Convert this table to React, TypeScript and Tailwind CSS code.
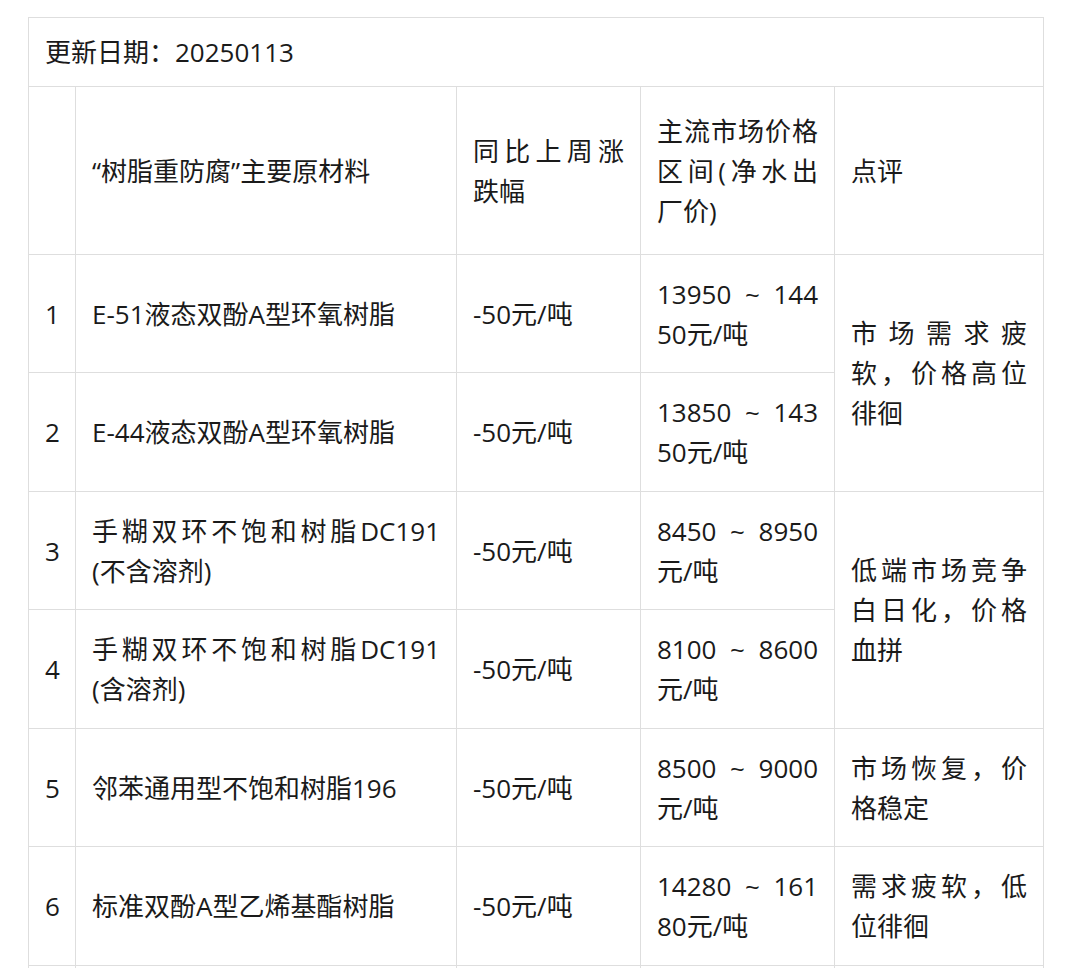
import React from "react";

const cell =
  "border border-[#dedede] px-[16px] py-0 align-middle text-justify break-all";

type Row = {
  n: string;
  name: React.ReactNode;
  change: string;
  price: string;
  comment?: string;
  span?: number;
  h: string;
};

const rows: Row[] = [
  {
    n: "1",
    name: "E-51液态双酚A型环氧树脂",
    change: "-50元/吨",
    price: "13950 ~ 14450元/吨",
    comment: "市场需求疲软，价格高位徘徊",
    span: 2,
    h: "h-[118px]",
  },
  {
    n: "2",
    name: "E-44液态双酚A型环氧树脂",
    change: "-50元/吨",
    price: "13850 ~ 14350元/吨",
    h: "h-[119px]",
  },
  {
    n: "3",
    name: (
      <>
        <span className="block [text-align-last:justify]">
          手糊双环不饱和树脂DC191
        </span>
        (不含溶剂)
      </>
    ),
    change: "-50元/吨",
    price: "8450 ~ 8950元/吨",
    comment: "低端市场竞争白日化，价格血拼",
    span: 2,
    h: "h-[118px]",
  },
  {
    n: "4",
    name: (
      <>
        <span className="block [text-align-last:justify]">
          手糊双环不饱和树脂DC191
        </span>
        (含溶剂)
      </>
    ),
    change: "-50元/吨",
    price: "8100 ~ 8600元/吨",
    h: "h-[119px]",
  },
  {
    n: "5",
    name: "邻苯通用型不饱和树脂196",
    change: "-50元/吨",
    price: "8500 ~ 9000元/吨",
    comment: "市场恢复，价格稳定",
    span: 1,
    h: "h-[118px]",
  },
  {
    n: "6",
    name: "标准双酚A型乙烯基酯树脂",
    change: "-50元/吨",
    price: "14280 ~ 16180元/吨",
    comment: "需求疲软，低位徘徊",
    span: 1,
    h: "h-[119px]",
  },
];

export default function App() {
  return (
    <div
      className="bg-white pl-[28px] pt-[17px] pb-[40px] text-[26px] leading-[40px] text-[#1a1a1a]"
      style={{ fontFamily: '"Open Sans", "Noto Sans CJK SC", sans-serif' }}
    >
      <table className="table-fixed border-collapse w-[1015px]">
        <colgroup>
          <col className="w-[47px]" />
          <col className="w-[381px]" />
          <col className="w-[184px]" />
          <col className="w-[194px]" />
          <col className="w-[209px]" />
        </colgroup>
        <tbody>
          <tr>
            <td colSpan={5} className={`${cell} h-[69px]`}>
              更新日期：20250113
            </td>
          </tr>
          <tr>
            <td className={`${cell} h-[168px]`}></td>
            <td className={cell}>“树脂重防腐”主要原材料</td>
            <td className={cell}>同比上周涨跌幅</td>
            <td className={cell}>主流市场价格区间(净水出厂价)</td>
            <td className={cell}>点评</td>
          </tr>
          {rows.map((r) => (
            <tr key={r.n}>
              <td className={`${cell} ${r.h}`}>{r.n}</td>
              <td className={cell}>{r.name}</td>
              <td className={cell}>{r.change}</td>
              <td className={cell}>{r.price}</td>
              {r.comment !== undefined && (
                <td className={cell} rowSpan={r.span}>
                  {r.comment}
                </td>
              )}
            </tr>
          ))}
          <tr>
            <td className={`${cell} h-[118px]`}></td>
            <td className={cell}></td>
            <td className={cell}></td>
            <td className={cell}></td>
            <td className={cell}></td>
          </tr>
        </tbody>
      </table>
    </div>
  );
}
